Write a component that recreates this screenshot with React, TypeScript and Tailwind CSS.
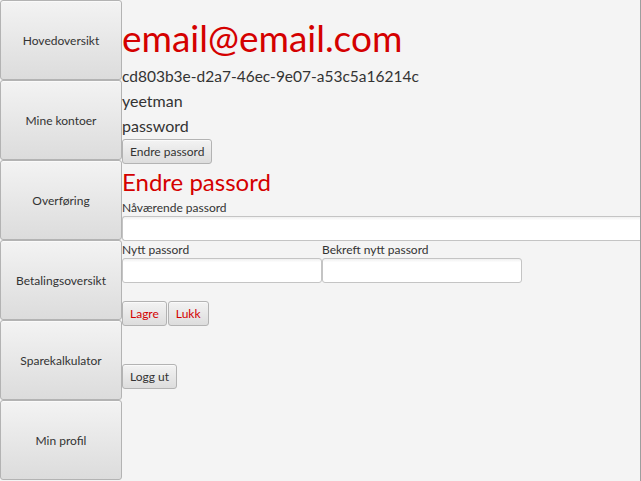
import React from "react";

const font = { fontFamily: 'Lato, "Open Sans", sans-serif' };

function SideButton({ label }: { label: string }) {
  return (
    <button className="h-[80px] w-[122px] shrink-0 rounded-[3px] border border-[#b3b3b3] bg-gradient-to-b from-[#f3f3f3] to-[#dcdcdc] pt-[2px] text-[12px] text-[#333333] shadow-[inset_0_1px_0_#fafafa]">
      {label}
    </button>
  );
}

function Btn({ label, red }: { label: string; red?: boolean }) {
  return (
    <button
      className={
        "h-[25px] rounded-[3px] border border-[#b3b3b3] bg-gradient-to-b from-[#f3f3f3] to-[#dddddd] px-[7px] pt-[1px] text-[12px] leading-[22px] shadow-[inset_0_1px_0_#fafafa] " +
        (red ? "text-[#d40000]" : "text-[#333333]")
      }
    >
      {label}
    </button>
  );
}

function Field({ className }: { className: string }) {
  return (
    <div
      className={
        "h-[25px] rounded-[3px] border border-[#c4c4c4] bg-gradient-to-b from-[#f0f0f0] to-[#ffffff] to-[15%] " +
        className
      }
    />
  );
}

export default function App() {
  return (
    <div className="flex h-[481px] w-[641px] overflow-hidden bg-[#f4f4f4]" style={font}>
      <div className="flex w-[122px] shrink-0 flex-col">
        <SideButton label="Hovedoversikt" />
        <SideButton label="Mine kontoer" />
        <SideButton label="Overføring" />
        <SideButton label="Betalingsoversikt" />
        <SideButton label="Sparekalkulator" />
        <SideButton label="Min profil" />
      </div>
      <div className="flex flex-1 flex-col border-r border-[#9e9e9e] pt-[14px] text-[#333333]">
        <div className="h-[50px] text-[37px] leading-[48px] text-[#d40000]">email@email.com</div>
        <div className="h-[25px] text-[15.5px] leading-[24px]">cd803b3e-d2a7-46ec-9e07-a53c5a16214c</div>
        <div className="h-[25px] text-[16px] leading-[24px]">yeetman</div>
        <div className="h-[25px] text-[16px] leading-[24px]">password</div>
        <div className="flex">
          <Btn label="Endre passord" />
        </div>
        <div className="h-[36px] text-[24px] leading-[36px] text-[#d40000]">Endre passord</div>
        <div className="h-[16px] text-[12px] leading-[16px]">Nåværende passord</div>
        <Field className="w-full rounded-r-none border-r-0" />
        <div className="flex">
          <div className="flex w-[200px] flex-col">
            <div className="h-[17px] text-[12px] leading-[17px]">Nytt passord</div>
            <Field className="w-[200px]" />
          </div>
          <div className="flex w-[200px] flex-col">
            <div className="h-[17px] text-[12px] leading-[17px]">Bekreft nytt passord</div>
            <Field className="w-[200px]" />
          </div>
        </div>
        <div className="mt-[18px] flex gap-[1px]">
          <Btn label="Lagre" red />
          <Btn label="Lukk" red />
        </div>
        <div className="mt-[38px] flex">
          <Btn label="Logg ut" />
        </div>
      </div>
    </div>
  );
}
